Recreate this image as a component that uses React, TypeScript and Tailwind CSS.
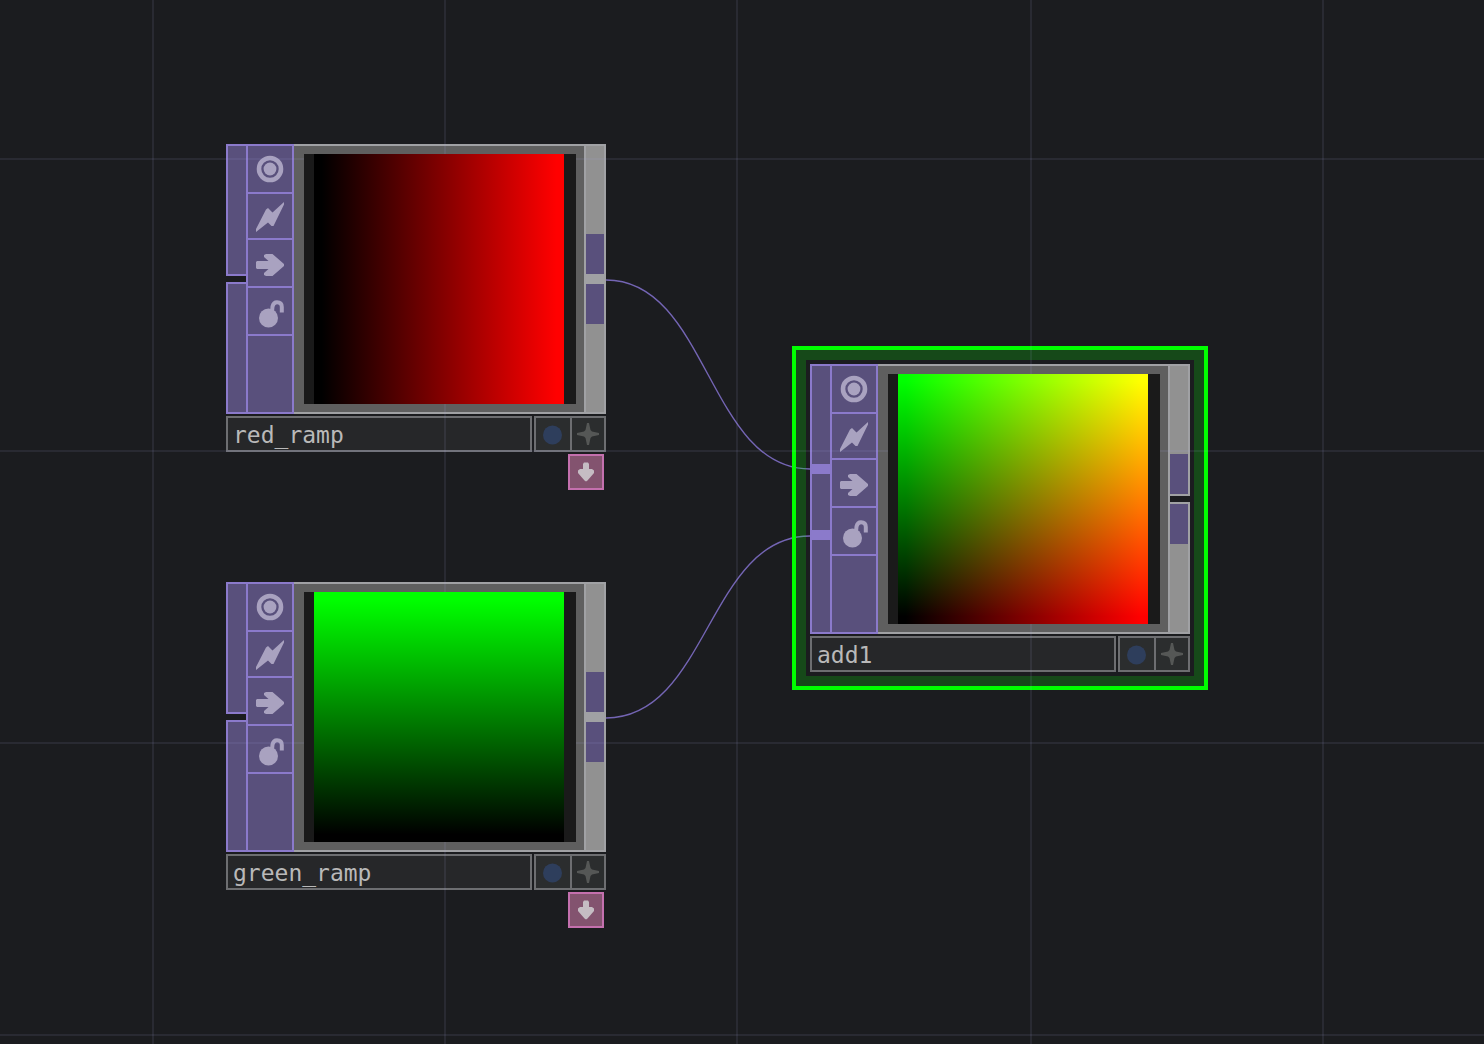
import React from "react";

type NodeProps = {
  name: string;
  preview: "red" | "green" | "mix";
  inputs?: boolean;
  docked?: boolean;
};

function ViewerIcon() {
  return (
    <svg width="28" height="28" viewBox="0 0 28 28" aria-hidden="true">
      <circle cx="14" cy="14" r="11" fill="none" stroke="#a9a2c0" strokeWidth="4.6" />
      <circle cx="14" cy="14" r="6.4" fill="#a9a2c0" />
    </svg>
  );
}

function BypassIcon() {
  return (
    <svg width="28" height="30" viewBox="0 0 28 30" aria-hidden="true">
      <path d="M28 0 V2.5 L17.5 24 H15.5 L12 20.5 L0 30 V27 L10 7.5 L12 6 L16.5 10.5 Z" fill="#a9a2c0" />
    </svg>
  );
}

function ArrowIcon() {
  return (
    <svg width="28" height="22" viewBox="0 0 28 22" aria-hidden="true">
      <path d="M1 7 H12.5 L8 3 V1 L10 0 H16.5 L28 10 V12 L16.5 22 H10 L8 21 V19 L12.5 15 H1 L0 14 V8 Z" fill="#a9a2c0" />
    </svg>
  );
}

function LockIcon() {
  return (
    <svg width="28" height="28" viewBox="0 0 28 28" aria-hidden="true">
      <circle cx="12.5" cy="18" r="9.5" fill="#a9a2c0" />
      <path d="M16 12 L16.5 6.5 Q17.5 2.3 21 2.3 Q25.8 2.3 25.8 7 V12.5" fill="none" stroke="#a9a2c0" strokeWidth="4" />
    </svg>
  );
}

function Preview({ kind }: { kind: NodeProps["preview"] }) {
  if (kind === "red") return <div className="h-[250px] w-[250px] bg-[linear-gradient(to_right,#000_3%,#f00_97%)]" />;
  if (kind === "green") return <div className="h-[250px] w-[250px] bg-[linear-gradient(to_top,#000_3%,#0f0_97%)]" />;
  return (
    <div className="h-[250px] w-[250px] bg-[linear-gradient(to_right,#000_3%,#f00_97%),linear-gradient(to_top,#000_3%,#0f0_97%)] bg-blend-screen" />
  );
}

function OperatorNode({ name, preview, inputs, docked }: NodeProps) {
  const flag = "flex items-center justify-center border-b-2 border-[#8b7acb]";
  return (
    <div className="w-[380px]">
      <div className="flex h-[270px]">
        <div className="flex w-5 flex-col border-l-2 border-[#8b7acb]">
          {inputs ? (
            <div className="flex flex-1 flex-col border-y-2 border-[#8b7acb] bg-[#59507c]">
              <div className="mt-[98px] h-2.5 bg-[#8b7acb]" />
              <div className="mt-14 h-2.5 bg-[#8b7acb]" />
            </div>
          ) : (
            <>
              <div className="h-[132px] border-y-2 border-[#8b7acb] bg-[#59507c]" />
              <div className="-ml-0.5 h-1.5 bg-[#1b1c1f]" />
              <div className="flex-1 border-y-2 border-[#8b7acb] bg-[#59507c]" />
            </>
          )}
        </div>
        <div className="flex w-12 flex-col border-2 border-[#8b7acb] bg-[#59507c]">
          <button type="button" aria-label="Viewer" className={flag + " h-12"}><ViewerIcon /></button>
          <button type="button" aria-label="Bypass" className={flag + " h-[46px] pt-0.5"}><BypassIcon /></button>
          <button type="button" aria-label="Cook" className={flag + " h-12 pt-1"}><ArrowIcon /></button>
          <button type="button" aria-label="Lock" className={flag + " h-12 pt-1.5"}><LockIcon /></button>
        </div>
        <div className="flex-1 border-y-2 border-[#a0a1a4] bg-[#5f5f5f] pr-2 pl-2.5">
          <div className="relative z-10 mt-2 flex bg-[#1a1a1a] pl-2.5"><Preview kind={preview} /></div>
        </div>
        <div className="flex w-[22px] flex-col border-2 border-[#a0a1a4] bg-[#919191]">
          <div className="mt-[88px] h-10 bg-[#59507c]" />
          {inputs ? (
            <div className="-mr-0.5 h-2.5 border-y-2 border-[#a0a1a4] bg-[#1b1c1f]" />
          ) : (
            <div className="h-2.5 bg-[#a0a1a4]" />
          )}
          <div className="h-10 bg-[#59507c]" />
        </div>
      </div>
      <div className="mt-0.5 flex h-9 gap-0.5">
        <input
          aria-label="Operator name"
          defaultValue={name}
          spellCheck={false}
          className="min-w-0 flex-1 border-2 border-[#6d6e71] bg-[#262729] px-[5px] pt-0.5 font-['DejaVu_Sans_Mono',monospace] text-[23px] leading-7 text-[#b9b9b9] outline-none"
        />
        <div className="flex w-[72px] border-2 border-[#6d6e71] bg-[#2b2d2e]">
          <button type="button" aria-label="Display" className="flex w-[34px] items-center justify-center pt-0.5">
            <svg width="20" height="20" viewBox="0 0 20 20" aria-hidden="true"><circle cx="9.5" cy="10" r="9.5" fill="#2e3e5c" /></svg>
          </button>
          <button type="button" aria-label="Activate viewer" className="flex flex-1 items-center justify-center border-l-2 border-[#6d6e71]">
            <svg width="22" height="22" viewBox="0 0 22 22" aria-hidden="true"><path d="M10 0 H12 L13.5 7 L15 8.5 L22 10 V12 L15 13.5 L13.5 15 L12 22 H10 L8.5 15 L7 13.5 L0 12 V10 L7 8.5 L8.5 7 Z" fill="#555756" /></svg>
          </button>
        </div>
      </div>
      {docked && (
        <button type="button" aria-label="Docked operators" className="mt-0.5 mr-0.5 ml-auto flex h-9 w-9 items-center justify-center border-2 border-[#c470ae] bg-[#83536f]">
          <svg width="16" height="20" viewBox="0 0 16 20" aria-hidden="true"><path d="M6 0.5 H10 L11 2 V7 L14 7 L16 8.5 V11 L9.5 18.5 L8 19.5 L6.5 18.5 L0 11 V8.5 L2 7 H5 V2 Z" fill="#c5bcc3" /></svg>
        </button>
      )}
    </div>
  );
}

export default function App() {
  return (
    <main className="relative min-h-screen overflow-hidden bg-[#1b1c1f]">
      <svg className="pointer-events-none absolute inset-0 h-full w-full" fill="none" aria-hidden="true">
        <path d="M606 280 C708 280 708 469 810 469" stroke="#7465b4" strokeWidth="1.4" />
        <path d="M606 718 C708 718 708 536 810 536" stroke="#7465b4" strokeWidth="1.4" />
      </svg>
      <div className="absolute top-[144px] left-[226px]"><OperatorNode name="red_ramp" preview="red" docked /></div>
      <div className="absolute top-[582px] left-[226px]"><OperatorNode name="green_ramp" preview="green" docked /></div>
      <div className="absolute top-[346px] left-[792px] border-4 border-[#00ff00]">
        <div className="border-[10px] border-[#00ff00]/20 p-1"><OperatorNode name="add1" preview="mix" inputs /></div>
      </div>
      <svg className="pointer-events-none absolute inset-0 h-full w-full" fill="none" aria-hidden="true">
        <g stroke="#a8a8e0" strokeOpacity="0.1" strokeWidth="2">
          {[153, 445, 737, 1031, 1323].map((x) => <line key={x} x1={x} x2={x} y1="0" y2="100%" />)}
          {[159, 451, 743, 1035].map((y) => <line key={y} x1="0" x2="100%" y1={y} y2={y} />)}
        </g>
      </svg>
    </main>
  );
}
